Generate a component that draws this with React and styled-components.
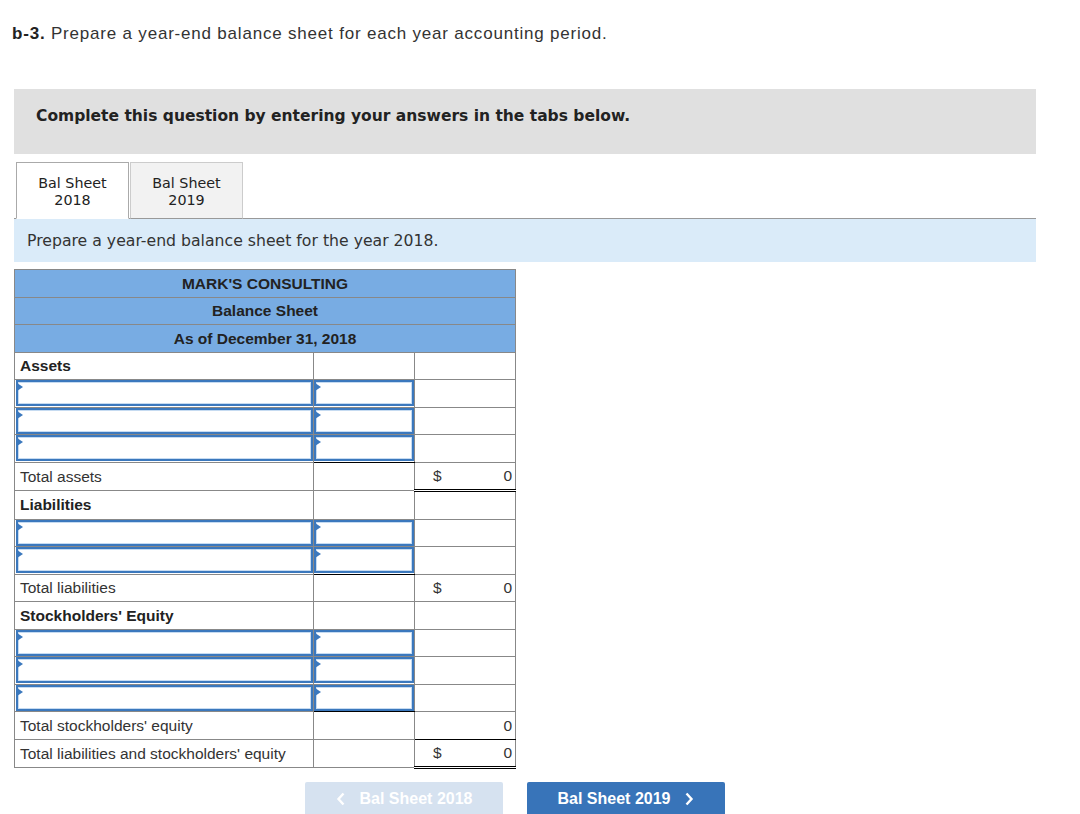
import React from 'react';
import styled, { createGlobalStyle } from 'styled-components';

const GlobalStyle = createGlobalStyle`
	body {
		margin: 0;
		background: #fff;
		font-family: 'Liberation Sans', Arial, sans-serif;
		color: #333;
	}
`;

const Page = styled.div`
	width: 1022px;
	padding: 23px 0 0 14px;
`;

const Title = styled.p`
	margin: 0 0 0 -2px;
	font-size: 17px;
	line-height: 22px;
	letter-spacing: 0.8px;
	color: #333;
	b {
		color: #222;
	}
`;

const Instructions = styled.div`
	margin-top: 44px;
	height: 65px;
	box-sizing: border-box;
	padding: 17px 22px 0;
	background: #e0e0e0;
	font-family: 'DejaVu Sans', Verdana, sans-serif;
	font-weight: bold;
	font-size: 15.5px;
	line-height: 20px;
	color: #222;
`;

const TabList = styled.div`
	display: flex;
	margin-top: 8px;
	padding-left: 2px;
	border-bottom: 1px solid #999;
`;

const Tab = styled.div`
	width: 113px;
	height: 57px;
	box-sizing: border-box;
	margin-bottom: -1px;
	margin-right: 1px;
	padding-top: 12px;
	text-align: center;
	font-family: 'DejaVu Sans', Verdana, sans-serif;
	font-size: 14.3px;
	line-height: 17px;
	color: #222;
	background: ${(p) => (p.$active ? '#fff' : '#f2f2f2')};
	border: 1px solid ${(p) => (p.$active ? '#aaa' : '#ccc')};
	border-bottom: ${(p) => (p.$active ? '1px solid #fff' : '1px solid #999')};
`;

const Prompt = styled.div`
	height: 43px;
	box-sizing: border-box;
	padding: 11px 13px 0;
	background: #daebf9;
	font-family: 'DejaVu Sans', Verdana, sans-serif;
	font-size: 15.7px;
	line-height: 21px;
	color: #333;
`;

const Sheet = styled.table`
	margin-top: 7px;
	width: 502px;
	border-collapse: collapse;
	table-layout: fixed;
	font-size: 15.5px;
	border: 1px solid #888;
`;

const HeadCell = styled.th`
	height: 26.5px;
	padding: 0;
	background: #78ace3;
	border: 1px solid #888;
	font-weight: bold;
	font-size: 15.5px;
	line-height: 17px;
	color: #222;
	text-align: center;
	vertical-align: middle;
`;

const Cell = styled.td`
	height: 26.5px;
	padding: 0 3px 0 5px;
	border: 1px solid #888;
	vertical-align: middle;
	line-height: 17px;
	color: ${(p) => (p.$bold ? '#222' : '#333')};
	font-weight: ${(p) => (p.$bold ? 'bold' : 'normal')};
	${(p) => p.$under && 'border-bottom: 1px solid #000;'}
	${(p) => p.$double && 'border-bottom: 3px double #000;'}
`;

const InputCell = styled.td`
	height: 26.5px;
	padding: 0 0 0 ${(p) => (p.$first ? '1px' : '0')};
	border: 1px solid #888;
	vertical-align: middle;
	${(p) => p.$under && 'border-bottom: 1px solid #000;'}
`;

const Field = styled.div`
	position: relative;
	height: 26px;
	box-sizing: border-box;
	border: 2px solid #3b78bd;
	box-shadow: inset 0 0 0 1px #c6dbf1;
	background: #fff;
	&::before {
		content: '';
		position: absolute;
		top: 1px;
		left: -1px;
		border-style: solid;
		border-width: 4px 0 4px 6px;
		border-color: transparent transparent transparent #3b78bd;
	}
`;

const Amount = styled.div`
	display: flex;
	justify-content: space-between;
	padding-left: 13px;
	color: #333;
`;

const ButtonRow = styled.div`
	display: flex;
	gap: 24px;
	margin-top: 13px;
	padding-left: 291px;
`;

const NavButton = styled.button`
	display: flex;
	align-items: center;
	justify-content: center;
	gap: 14px;
	width: 198px;
	height: 40px;
	border: none;
	border-radius: 2px;
	padding: 0 0 6px;
	font-family: 'Liberation Sans', Arial, sans-serif;
	font-weight: bold;
	font-size: 16px;
	color: #fff;
	background: ${(p) => (p.$disabled ? '#d6e2f0' : '#3874b9')};
	svg {
		flex: none;
	}
`;

const Chevron = ({ dir }) => (
	<svg width="10" height="14" viewBox="0 0 10 14">
		<path
			d={dir === 'left' ? 'M7.5 1.5 2.5 7l5 5.5' : 'M2.5 1.5 7.5 7l-5 5.5'}
			fill="none"
			stroke="#fff"
			strokeWidth="2.4"
		/>
	</svg>
);

const InputRow = ({ under }) => (
	<tr>
		<InputCell $first>
			<Field />
		</InputCell>
		<InputCell $under={under}>
			<Field />
		</InputCell>
		<Cell />
	</tr>
);

const LabelRow = ({ label }) => (
	<tr>
		<Cell $bold>{label}</Cell>
		<Cell />
		<Cell />
	</tr>
);

const TotalRow = ({ label, dollar, double, under }) => (
	<tr>
		<Cell>{label}</Cell>
		<Cell />
		<Cell $double={double} $under={under}>
			<Amount>
				<span>{dollar ? '$' : ''}</span>
				<span>0</span>
			</Amount>
		</Cell>
	</tr>
);

export default function App() {
	return (
		<>
			<GlobalStyle />
			<Page>
				<Title>
					<b>b-3.</b> Prepare a year-end balance sheet for each year accounting period.
				</Title>
				<Instructions>Complete this question by entering your answers in the tabs below.</Instructions>
				<TabList>
					<Tab $active>
						Bal Sheet
						<br />
						2018
					</Tab>
					<Tab>
						Bal Sheet
						<br />
						2019
					</Tab>
				</TabList>
				<Prompt>Prepare a year-end balance sheet for the year 2018.</Prompt>
				<Sheet>
					<colgroup>
						<col style={{ width: 299 }} />
						<col style={{ width: 101 }} />
						<col style={{ width: 101 }} />
					</colgroup>
					<thead>
						<tr>
							<HeadCell colSpan={3}>MARK'S CONSULTING</HeadCell>
						</tr>
						<tr>
							<HeadCell colSpan={3}>Balance Sheet</HeadCell>
						</tr>
						<tr>
							<HeadCell colSpan={3}>As of December 31, 2018</HeadCell>
						</tr>
					</thead>
					<tbody>
						<LabelRow label="Assets" />
						<InputRow />
						<InputRow />
						<InputRow under />
						<TotalRow label="Total assets" dollar double />
						<LabelRow label="Liabilities" />
						<InputRow />
						<InputRow under />
						<TotalRow label="Total liabilities" dollar />
						<LabelRow label="Stockholders' Equity" />
						<InputRow />
						<InputRow />
						<InputRow under />
						<TotalRow label="Total stockholders' equity" under />
						<TotalRow label="Total liabilities and stockholders' equity" dollar double />
					</tbody>
				</Sheet>
				<ButtonRow>
					<NavButton $disabled>
						<Chevron dir="left" />
						Bal Sheet 2018
					</NavButton>
					<NavButton>
						Bal Sheet 2019
						<Chevron dir="right" />
					</NavButton>
				</ButtonRow>
			</Page>
		</>
	);
}
